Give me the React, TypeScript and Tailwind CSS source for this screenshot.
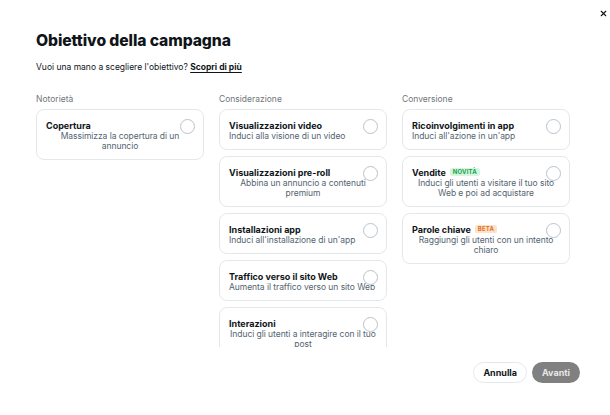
import { X } from 'lucide-react';

type Badge = 'new' | 'beta';

interface Objective {
  title: string;
  desc: string;
  badge?: Badge;
}

const columns: { label: string; items: Objective[] }[] = [
  {
    label: 'Notorietà',
    items: [{ title: 'Copertura', desc: 'Massimizza la copertura di un annuncio' }],
  },
  {
    label: 'Considerazione',
    items: [
      { title: 'Visualizzazioni video', desc: 'Induci alla visione di un video' },
      { title: 'Visualizzazioni pre-roll', desc: 'Abbina un annuncio a contenuti premium' },
      { title: 'Installazioni app', desc: "Induci all'installazione di un'app" },
      { title: 'Traffico verso il sito Web', desc: 'Aumenta il traffico verso un sito Web' },
      { title: 'Interazioni', desc: 'Induci gli utenti a interagire con il tuo post' },
    ],
  },
  {
    label: 'Conversione',
    items: [
      { title: 'Ricoinvolgimenti in app', desc: "Induci all'azione in un'app" },
      { title: 'Vendite', desc: 'Induci gli utenti a visitare il tuo sito Web e poi ad acquistare', badge: 'new' },
      { title: 'Parole chiave', desc: 'Raggiungi gli utenti con un intento chiaro', badge: 'beta' },
    ],
  },
];

function ObjectiveCard({ item }: { item: Objective }) {
  return (
    <div className="relative rounded-[8px] border border-[#e4e8eb] px-[9px] pt-[9px] pb-[8px] text-left">
      <div className="flex items-center gap-[4px] h-[12px] pr-[20px]">
        <span className="text-[9px] font-bold text-[#0f1419] leading-[11px] whitespace-nowrap">{item.title}</span>
        {item.badge === 'new' && (
          <span className="rounded-[2px] bg-[#d6f5e1] px-[3px] text-[6px] font-bold leading-[8px] tracking-wide text-[#17a34a]">
            NOVITÀ
          </span>
        )}
        {item.badge === 'beta' && (
          <span className="rounded-[2px] bg-[#fde2cc] px-[3px] text-[6px] font-bold leading-[8px] tracking-wide text-[#e2711d]">
            BETA
          </span>
        )}
      </div>
      <div className="text-[8.5px] leading-[10px] text-[#536471]">
        <span className="inline-block text-center tracking-[-0.05px]">{item.desc}</span>
      </div>
      <div className="absolute right-[8px] top-[9px] h-[15px] w-[15px] rounded-full border border-[#b9c3cb] bg-white" />
    </div>
  );
}

export default function App() {
  return (
    <div
      className="relative h-[415px] w-[610px] overflow-hidden bg-white"
      style={{ fontFamily: 'Inter, "Noto Sans", sans-serif' }}
    >
      <button className="absolute right-[2px] top-[9px] text-[#0f1419]">
        <X size={9} strokeWidth={3} />
      </button>

      <div className="pl-[36px] pt-[30px]">
        <h1 className="text-[15.7px] font-extrabold leading-[22px] tracking-[-0.1px] text-[#0f1419]">
          Obiettivo della campagna
        </h1>
        <p className="mt-[9px] text-[8.5px] leading-[12px] text-[#0f1419]">
          Vuoi una mano a scegliere l'obiettivo?{' '}
          <span className="font-bold underline underline-offset-2">Scopri di più</span>
        </p>

        <div className="mt-[20px] h-[254px] overflow-hidden">
          <div className="grid w-[534px] grid-cols-3 gap-x-[15px]">
            {columns.map((col) => (
              <div key={col.label} className="flex flex-col">
                <div className="mb-[4px] text-[8.5px] leading-[12px] text-[#71767b]">{col.label}</div>
                <div className="flex flex-col gap-[6px]">
                  {col.items.map((item) => (
                    <ObjectiveCard key={item.title} item={item} />
                  ))}
                </div>
              </div>
            ))}
          </div>
        </div>
      </div>

      <div className="absolute bottom-[32px] right-[30px] flex gap-[5px]">
        <button className="h-[21px] rounded-full border border-[#e4e8eb] bg-white px-[9px] text-[9px] font-bold text-[#0f1419]">
          Annulla
        </button>
        <button className="h-[21px] rounded-full bg-[#808080] px-[10px] text-[9px] font-bold text-[#e8e8e8]">
          Avanti
        </button>
      </div>
    </div>
  );
}
